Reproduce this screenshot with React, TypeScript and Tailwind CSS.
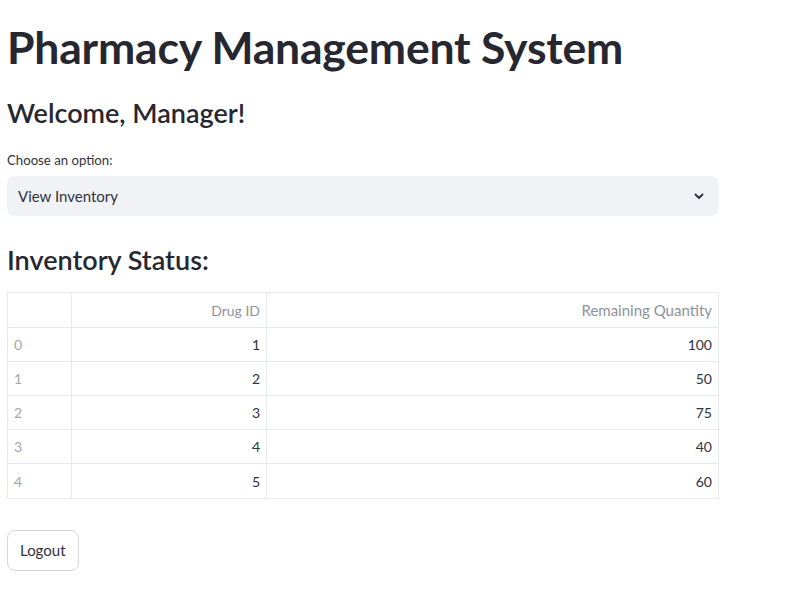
import React from "react";

const rows = [
  [0, 1, 100],
  [1, 2, 50],
  [2, 3, 75],
  [3, 4, 40],
  [4, 5, 60],
];

export default function App() {
  return (
    <div
      className="min-h-[604px] w-[799px] bg-white text-[#31333f]"
      style={{ fontFamily: "Lato, 'Noto Sans', sans-serif" }}
    >
      <div className="w-[712px] pl-[7px] box-content pt-[21px]">
        <h1 className="text-[44.5px] font-bold leading-[52px] text-[#262730] tracking-[-0.2px]">
          Pharmacy Management System
        </h1>
        <h2 className="mt-[24px] text-[27px] font-semibold leading-[32px] text-[#262730]">
          Welcome, Manager!
        </h2>
        <div className="mt-[23px] text-[13.2px] leading-[16px] text-[#31333f]">Choose an option:</div>
        <div className="mt-[8px] flex h-[40px] items-center justify-between rounded-[8px] bg-[#f0f2f6] pl-[11px] pr-[14px]">
          <span className="text-[15px] text-[#31333f]">View Inventory</span>
          <svg width="12" height="12" viewBox="0 0 24 24" fill="none" stroke="#31333f" strokeWidth="4" strokeLinecap="round" strokeLinejoin="round">
            <path d="M5 9l7 7 7-7" />
          </svg>
        </div>
        <h2 className="mt-[28px] text-[27px] font-semibold leading-[32px] text-[#262730]">
          Inventory Status:
        </h2>
        <div className="mt-[16px] border border-[#e6e9ef] text-[14px]">
          <div className="flex h-[35px] border-b border-[#e6e9ef]">
            <div className="w-[64px] border-r border-[#e6e9ef]" />
            <div className="flex w-[195px] items-center justify-end border-r border-[#e6e9ef] pr-[6px] text-[#8f929c]">Drug ID</div>
            <div className="flex flex-1 items-center justify-end pr-[6px] text-[15px] text-[#8f929c]">Remaining Quantity</div>
          </div>
          {rows.map((r, i) => (
            <div key={i} className={"flex h-[34px] " + (i < rows.length - 1 ? "border-b border-[#e6e9ef]" : "")}>
              <div className="flex w-[64px] items-center border-r border-[#e6e9ef] pl-[6px] text-[#a3a5ad]">{r[0]}</div>
              <div className="flex w-[195px] items-center justify-end border-r border-[#e6e9ef] pr-[6px] text-[#31333f]">{r[1]}</div>
              <div className="flex flex-1 items-center justify-end pr-[6px] text-[#31333f]">{r[2]}</div>
            </div>
          ))}
        </div>
        <button className="mt-[31px] flex h-[41px] items-center rounded-[8px] border border-[#d5d7dd] bg-white px-[12px] text-[15px] text-[#31333f]">
          Logout
        </button>
      </div>
    </div>
  );
}
